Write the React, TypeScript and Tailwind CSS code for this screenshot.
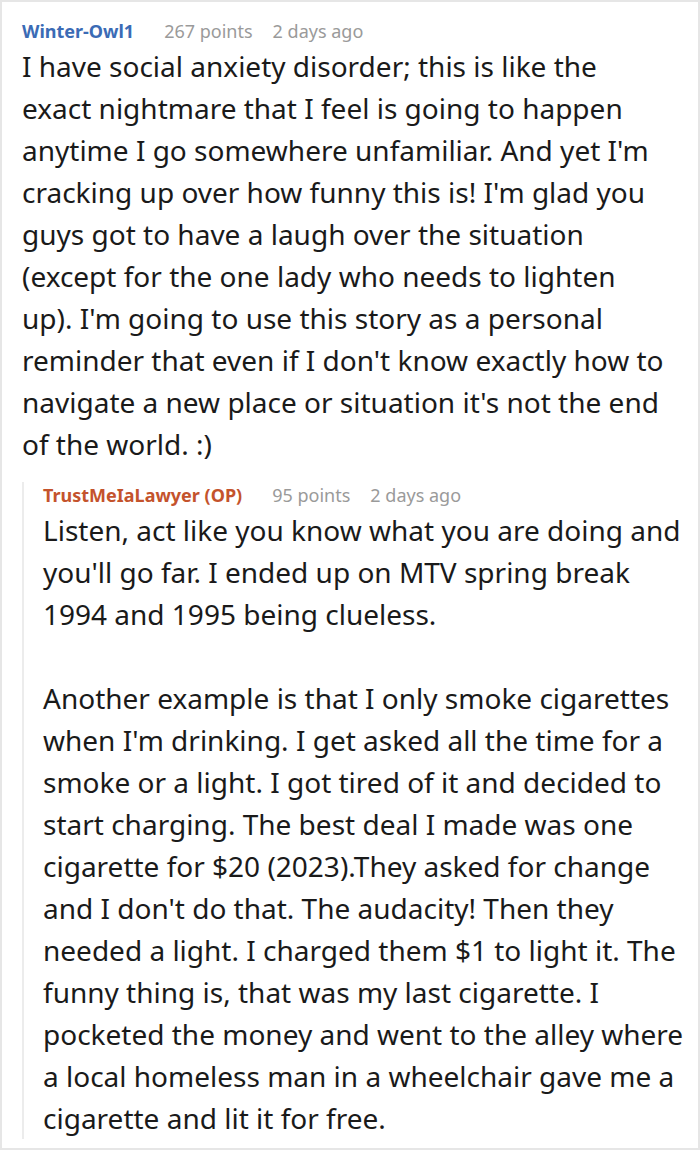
export default function App() {
  const font = { fontFamily: '"Noto Sans", "Open Sans", sans-serif' };

  return (
    <div className="w-[700px] h-[1150px] bg-white border-2 border-[#e6e6e6] overflow-hidden" style={font}>
      {/* top comment */}
      <div className="pl-[20px] pr-[26px] pt-[16px]">
        <div className="flex items-baseline gap-[20px] text-[18px] leading-[26px]">
          <span className="font-bold text-[#3b6bb5] mr-[10px]">Winter-Owl1</span>
          <span className="text-[#9a9a9a]">267 points</span>
          <span className="text-[#9a9a9a]">2 days ago</span>
        </div>
        <p className="text-[28px] leading-[42px] text-[#1a1a1a] mt-[1px]">
          I have social anxiety disorder; this is like the exact nightmare that I feel is going to happen anytime I go
          somewhere unfamiliar. And yet I'm cracking up over how funny this is! I'm glad you guys got to have a laugh
          over the situation (except for the one lady who needs to lighten up). I'm going to use this story as a
          personal reminder that even if I don't know exactly how to navigate a new place or situation it's not the
          end of the world. :)
        </p>
      </div>

      {/* reply */}
      <div className="ml-[20px] mt-[17px] border-l-2 border-[#ececec] pl-[19px] pr-1">
        <div className="flex items-baseline gap-[20px] text-[18px] leading-[26px]">
          <span className="font-bold text-[#c4532c] mr-[10px]">TrustMeIaLawyer (OP)</span>
          <span className="text-[#9a9a9a]">95 points</span>
          <span className="text-[#9a9a9a]">2 days ago</span>
        </div>
        <div className="text-[28px] leading-[42px] text-[#1a1a1a] mt-[1px]">
          <p>
            Listen, act like you know what you are doing and you'll go far. I ended up on MTV spring break 1994 and
            1995 being clueless.
          </p>
          <p className="mt-[42px]">
            Another example is that I only smoke cigarettes when I'm drinking. I get asked all the time for a smoke or
            a light. I got tired of it and decided to start charging. The best deal I made was one cigarette for $20
            (2023).They asked for change and I don't do that. The audacity! Then they needed a light. I charged them $1
            to light it. The funny thing is, that was my last cigarette. I pocketed the money and went to the alley
            where a local homeless man in a wheelchair gave me a cigarette and lit it for free.
          </p>
        </div>
      </div>
    </div>
  );
}
